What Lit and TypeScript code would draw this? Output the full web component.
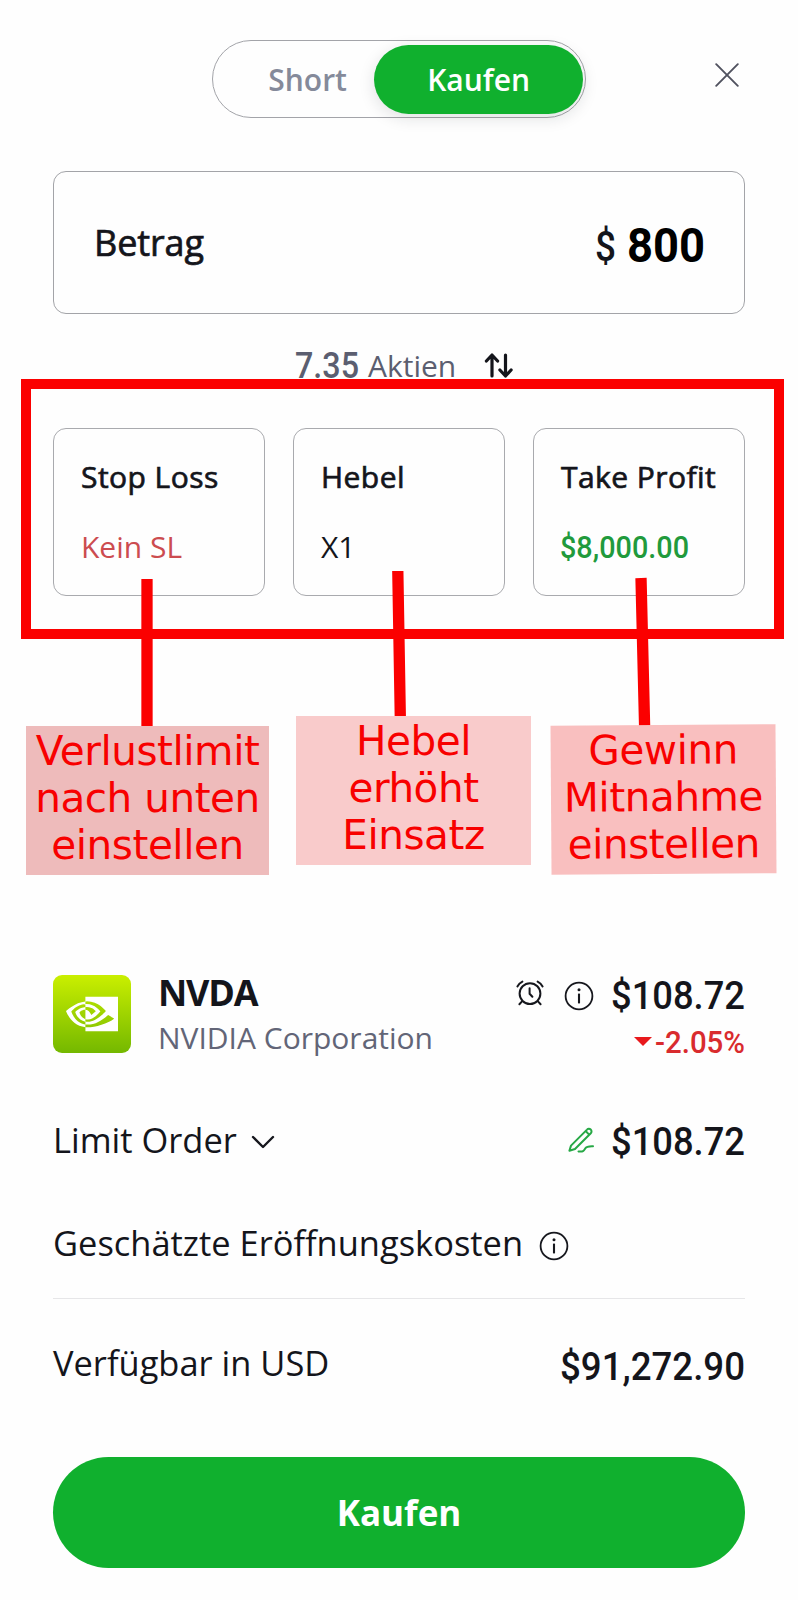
import { LitElement, css, html, svg } from "lit";
import { customElement, property, state } from "lit/decorators.js";
import { classMap } from "lit/directives/class-map.js";

type Side = "short" | "buy";

// Narrow figures: the text is fitted to a given width, the box is exactly one cap high.
@customElement("price-text")
export class PriceText extends LitElement {
  @property() value = "";
  @property({ type: Number }) width = 100;
  @property({ type: Number }) size = 32;

  static styles = css`
    :host {
      display: block;
      flex: none;
      font-family: Roboto, "Liberation Sans", sans-serif;
      font-weight: 500;
    }

    svg {
      display: block;
      overflow: visible;
    }
  `;

  render() {
    const height = Math.round(this.size * 7.11) / 10;
    return html`
      <svg width=${this.width} height=${height}>
        ${svg`<text
          x="0"
          y=${height}
          font-size=${this.size}
          textLength=${this.width}
          lengthAdjust="spacingAndGlyphs"
          fill="currentColor"
        >${this.value}</text>`}
      </svg>
    `;
  }
}

@customElement("info-icon")
export class InfoIcon extends LitElement {
  static styles = css`
    :host {
      display: block;
      flex: none;
      width: 30px;
      height: 30px;
    }

    svg {
      display: block;
    }
  `;

  render() {
    return html`
      <svg width="30" height="30" viewBox="0 0 30 30" fill="none" stroke="#16171d" stroke-width="1.8">
        <circle cx="15" cy="15" r="13.4" />
        <path d="M15 12.6V22.4" stroke-width="2.1" />
        <circle cx="15" cy="8.8" r="1.5" fill="#16171d" stroke="none" />
      </svg>
    `;
  }
}

@customElement("app-root")
export class AppRoot extends LitElement {
  @state() private side: Side = "buy";

  static styles = css`
    :host {
      display: block;
      position: relative;
      width: 798px;
      height: 1600px;
      overflow: hidden;
      background: #fefefe;
      color: #14151b;
      font-family: "Open Sans", "Noto Sans", sans-serif;
    }

    * {
      box-sizing: border-box;
    }

    button {
      border: 0;
      background: none;
      padding: 0;
      font: inherit;
      color: inherit;
    }

    svg {
      display: block;
      flex: none;
    }

    .sheet {
      display: flex;
      flex-direction: column;
      width: 692px;
      margin: 0 auto;
    }

    .top {
      display: grid;
      grid-template-columns: 1fr 374px 1fr;
      height: 171px;
      padding-top: 40px;
      align-items: start;
    }

    .toggle {
      grid-column: 2;
      display: flex;
      justify-content: flex-end;
      height: 78px;
      padding: 4px 2px;
      border: 1px solid #a3a4a9;
      border-radius: 39px;
    }

    .side {
      height: 69px;
      border-radius: 35px;
      color: #858a9a;
      font-size: 30px;
      font-weight: 600;
      line-height: 69px;
    }

    .side.short {
      width: 160px;
      padding-left: 26px;
    }

    .side.buy {
      width: 210px;
    }

    .side.active {
      background: #10b02e;
      color: #fff;
      box-shadow: 0 4px 16px rgba(20, 30, 40, 0.13);
    }

    .close {
      justify-self: end;
      margin: 23px 6px 0 0;
    }

    .amount {
      display: flex;
      align-items: center;
      height: 143px;
      padding: 0 39px 0 40px;
      border: 1px solid #a3a4a8;
      border-radius: 13px;
      font-size: 36px;
      letter-spacing: -0.1px;
      -webkit-text-stroke: 0.7px currentColor;
    }

    .figure {
      display: flex;
      align-items: center;
      gap: 11px;
      margin-left: auto;
      padding-top: 5px;
      letter-spacing: 0;
      -webkit-text-stroke: 0;
    }

    .figure .total {
      color: #000;
      font-weight: 700;
    }

    .shares {
      display: flex;
      align-items: flex-end;
      height: 64px;
      padding-left: 242px;
      color: #5b5e70;
    }

    .unit {
      margin: 0 28px 1px 9px;
      font-size: 30px;
      line-height: 22px;
    }

    .cards {
      display: grid;
      grid-template-columns: repeat(3, 212px);
      gap: 28px;
      margin-top: 50px;
    }

    .card {
      display: flex;
      flex-direction: column;
      gap: 29px;
      height: 168px;
      padding: 28px 0 0 27px;
      border: 1px solid #a9aaae;
      border-radius: 13px;
      font-size: 30px;
      line-height: 40px;
      white-space: nowrap;
    }

    .card-title {
      letter-spacing: 0.45px;
      -webkit-text-stroke: 0.7px currentColor;
    }

    .card-value {
      display: flex;
      align-items: center;
      height: 41px;
    }

    .loss {
      color: #cc4c50;
    }

    .gain {
      margin-left: -1px;
      color: #219a3c;
    }

    .asset {
      display: flex;
      height: 78px;
      margin-top: 379px;
    }

    .logo {
      display: grid;
      place-items: center;
      width: 78px;
      height: 78px;
      border-radius: 9px;
      background: linear-gradient(#caef00, #74b800);
    }

    .names {
      margin: -5px 0 0 27px;
      line-height: 45px;
      white-space: nowrap;
    }

    .ticker {
      font-size: 36px;
      font-weight: 700;
      letter-spacing: -1.2px;
    }

    .company {
      color: #626577;
      font-size: 30px;
    }

    .quote {
      display: flex;
      flex-direction: column;
      align-items: flex-end;
      gap: 21px;
      margin-left: auto;
      padding-top: 6px;
    }

    .last {
      display: flex;
      align-items: center;
      height: 28px;
    }

    .last svg {
      margin-bottom: 4px;
    }

    .last info-icon {
      margin: 2px 17px 0 20px;
    }

    .change {
      display: flex;
      align-items: center;
      gap: 3px;
      color: #d92b2e;
    }

    .row {
      display: flex;
      align-items: center;
      height: 50px;
      font-size: 34.45px;
      line-height: 50px;
      white-space: nowrap;
    }

    .row price-text {
      padding-top: 2px;
    }

    .order .chevron {
      margin: 4px 0 0 14px;
    }

    .order {
      margin-top: 62px;
    }

    .order .edit {
      margin: 0 17px 0 auto;
    }

    .costs {
      gap: 16px;
      margin-top: 53px;
    }

    .costs info-icon {
      margin-top: 5px;
    }

    .divider {
      height: 1px;
      margin-top: 30px;
      background: #e6e6e8;
    }

    .funds {
      margin-top: 39px;
      justify-content: space-between;
    }

    .funds price-text {
      padding-top: 6px;
    }

    .submit {
      height: 111px;
      margin-top: 69px;
      border-radius: 56px;
      background: #10b02e;
      color: #fff;
      font-size: 35px;
      font-weight: 700;
    }

    /* marker layer over the order form */
    .marks {
      position: absolute;
      inset: 0;
    }

    .note {
      position: absolute;
      height: 149px;
      padding-top: 2px;
      color: #f80000;
      font-family: "DejaVu Sans", sans-serif;
      font-size: 40.5px;
      letter-spacing: -0.45px;
      line-height: 47px;
      text-align: center;
      white-space: pre;
    }

    .note.stop {
      left: 26px;
      top: 726px;
      width: 243px;
      background: #eebbbb;
    }

    .note.leverage {
      left: 296px;
      top: 716px;
      width: 235px;
      background: #f9cbcb;
    }

    .note.profit {
      left: 551px;
      top: 725px;
      width: 225px;
      background: #f9bfbf;
      transform: rotate(-0.4deg);
    }
  `;

  private select(side: Side): void {
    this.side = side;
  }

  private renderSide(side: Side, label: string) {
    return html`
      <button
        class=${classMap({ side: true, [side]: true, active: this.side === side })}
        @click=${() => this.select(side)}
      >
        ${label}
      </button>
    `;
  }

  private renderAsset() {
    return html`
      <section class="asset">
        <div class="logo">
          <svg width="52" height="52" viewBox="0 0 24 24" fill="#fff">
            <path
              d="M8.948 8.798v-1.43a6.7 6.7 0 0 1 .424-.018c3.922-.124 6.493 3.374 6.493 3.374s-2.774 3.851-5.75 3.851c-.398 0-.787-.062-1.158-.185v-4.346c1.528.185 1.837.857 2.747 2.385l2.04-1.714s-1.492-1.952-4-1.952a6.016 6.016 0 0 0-.796.035m0-4.735v2.138l.424-.027c5.45-.185 9.01 4.47 9.01 4.47s-4.08 4.964-8.33 4.964c-.37 0-.733-.035-1.095-.097v1.325c.3.035.61.062.91.062 3.957 0 6.82-2.023 9.593-4.408.459.371 2.34 1.263 2.73 1.652-2.633 2.208-8.772 3.984-12.253 3.984-.335 0-.653-.018-.971-.053v1.864H24V4.063zm0 10.326v1.131c-3.657-.654-4.673-4.46-4.673-4.46s1.758-1.944 4.673-2.262v1.237H8.94c-1.528-.186-2.73 1.245-2.73 1.245s.68 2.412 2.739 3.11M2.456 10.9s2.164-3.197 6.5-3.533V6.201C4.153 6.59 0 10.653 0 10.653s2.35 6.802 8.948 7.42v-1.237c-4.84-.6-6.492-5.936-6.492-5.936z"
            />
          </svg>
        </div>
        <div class="names">
          <div class="ticker">NVDA</div>
          <div class="company">NVIDIA Corporation</div>
        </div>
        <div class="quote">
          <div class="last">
            <svg width="28" height="26" viewBox="0 0 28 26" fill="none" stroke="#16171d" stroke-width="2" stroke-linecap="round">
              <circle cx="14" cy="13.6" r="10.4" />
              <path d="M13.6 8.2V13.8L16.4 16.8" />
              <path d="M1.4 6.4Q3.2 3.2 6.4 1.6M26.6 6.4Q24.8 3.2 21.6 1.6M5.8 21.6L3.4 24.2M22.2 21.6L24.6 24.2" />
            </svg>
            <info-icon></info-icon>
            <price-text value="$108.72" width="134" size="39.5"></price-text>
          </div>
          <div class="change">
            <svg width="18" height="9" viewBox="0 0 18 9"><path d="M0 0H18L9 9z" fill="#e8191c" /></svg>
            <price-text value="-2.05%" width="90" size="32"></price-text>
          </div>
        </div>
      </section>
    `;
  }

  private renderMarks() {
    return html`
      <div class="marks">
        <svg width="798" height="1600" viewBox="0 0 798 1600" fill="none" stroke="#fb0000">
          <rect x="26" y="384" width="753" height="250" stroke-width="10" />
          <path d="M147 579V727M397.8 571L400.3 717M641 578L644.6 726" stroke-width="11.3" />
        </svg>
        <div class="note stop">${"Verlustlimit\nnach unten\neinstellen"}</div>
        <div class="note leverage">${"Hebel\nerhöht\nEinsatz"}</div>
        <div class="note profit">${"Gewinn\nMitnahme\neinstellen"}</div>
      </div>
    `;
  }

  render() {
    return html`
      <main class="sheet">
        <header class="top">
          <div class="toggle">
            ${this.renderSide("short", "Short")} ${this.renderSide("buy", "Kaufen")}
          </div>
          <button class="close" aria-label="Schließen">
            <svg width="24" height="24" viewBox="0 0 24 24" stroke="#50525f" stroke-width="1.9" stroke-linecap="round">
              <path d="M1.2 1.2L22.8 22.8M22.8 1.2L1.2 22.8" />
            </svg>
          </button>
        </header>

        <section class="amount">
          <span>Betrag</span>
          <div class="figure">
            <price-text value="$" width="21" size="43"></price-text>
            <price-text class="total" value="800" width="78" size="48"></price-text>
          </div>
        </section>

        <div class="shares">
          <price-text value="7.35" width="64" size="36"></price-text>
          <span class="unit">Aktien</span>
          <svg width="29" height="25" viewBox="0 0 29 25" fill="none" stroke="#14151b" stroke-width="3.2" stroke-linecap="round" stroke-linejoin="round">
            <path d="M8 23V2M2.4 8L8 2L13.6 8M21.5 2V23M15.9 17L21.5 23L27.1 17" />
          </svg>
        </div>

        <section class="cards">
          <div class="card">
            <span class="card-title">Stop Loss</span>
            <span class="card-value loss">Kein SL</span>
          </div>
          <div class="card">
            <span class="card-title">Hebel</span>
            <span class="card-value">X1</span>
          </div>
          <div class="card">
            <span class="card-title">Take Profit</span>
            <price-text class="card-value gain" value="$8,000.00" width="129" size="32"></price-text>
          </div>
        </section>

        ${this.renderAsset()}

        <div class="row order">
          <span>Limit Order</span>
          <svg class="chevron" width="24" height="14" viewBox="0 0 24 14" fill="none" stroke="#16171d" stroke-width="2.4" stroke-linecap="round" stroke-linejoin="round">
            <path d="M2 2L12 12L22 2" />
          </svg>
          <svg class="edit" width="26" height="26" viewBox="0 0 26 26" fill="none" stroke="#26a845" stroke-width="2" stroke-linecap="round" stroke-linejoin="round">
            <path d="M1.4 23.8L3 18.6L19 2.6a2.5 2.5 0 0 1 3.8 3.6L7 22ZM17.6 4L21.2 7.6" />
            <path d="M10.5 24.4C15.5 25.2 16 23.4 17.2 21.4S20 19 25 19.2" />
          </svg>
          <price-text value="$108.72" width="134" size="39.5"></price-text>
        </div>

        <div class="row costs">
          <span>Geschätzte Eröffnungskosten</span>
          <info-icon></info-icon>
        </div>

        <div class="divider"></div>

        <div class="row funds">
          <span>Verfügbar in USD</span>
          <price-text value="$91,272.90" width="185" size="39.5"></price-text>
        </div>

        <button class="submit">Kaufen</button>
      </main>
      ${this.renderMarks()}
    `;
  }
}

declare global {
  interface HTMLElementTagNameMap {
    "app-root": AppRoot;
    "price-text": PriceText;
    "info-icon": InfoIcon;
  }
}
